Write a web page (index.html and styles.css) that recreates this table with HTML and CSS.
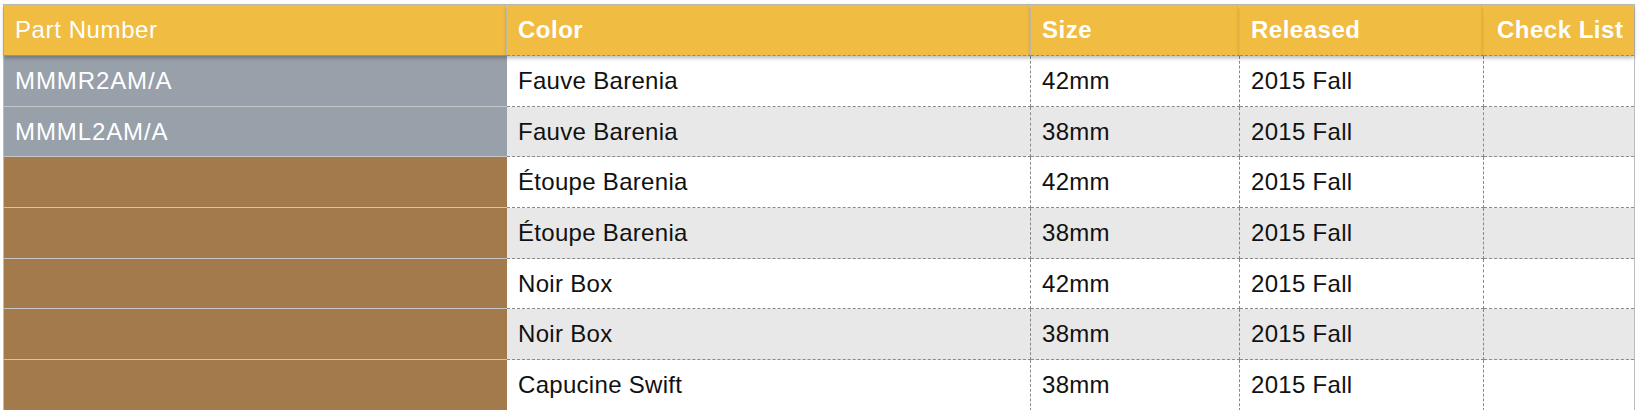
FILE: index.html
```html
<!DOCTYPE html>
<html lang="en">
<head>
<meta charset="utf-8">
<title>Watch Bands</title>
<link rel="stylesheet" href="styles.css">
</head>
<body>
<table class="sheet">
  <colgroup>
    <col class="c-part">
    <col class="c-color">
    <col class="c-size">
    <col class="c-rel">
    <col class="c-check">
  </colgroup>
  <thead>
    <tr>
      <th class="h-part">Part Number</th>
      <th>Color</th>
      <th>Size</th>
      <th>Released</th>
      <th class="h-last">Check List</th>
    </tr>
  </thead>
  <tbody>
    <tr>
      <td class="part gray">MMMR2AM/A</td>
      <td>Fauve Barenia</td>
      <td>42mm</td>
      <td>2015 Fall</td>
      <td class="last"></td>
    </tr>
    <tr>
      <td class="part gray">MMML2AM/A</td>
      <td>Fauve Barenia</td>
      <td>38mm</td>
      <td>2015 Fall</td>
      <td class="last"></td>
    </tr>
    <tr>
      <td class="part brown"></td>
      <td>Étoupe Barenia</td>
      <td>42mm</td>
      <td>2015 Fall</td>
      <td class="last"></td>
    </tr>
    <tr>
      <td class="part brown"></td>
      <td>Étoupe Barenia</td>
      <td>38mm</td>
      <td>2015 Fall</td>
      <td class="last"></td>
    </tr>
    <tr>
      <td class="part brown"></td>
      <td>Noir Box</td>
      <td>42mm</td>
      <td>2015 Fall</td>
      <td class="last"></td>
    </tr>
    <tr>
      <td class="part brown"></td>
      <td>Noir Box</td>
      <td>38mm</td>
      <td>2015 Fall</td>
      <td class="last"></td>
    </tr>
    <tr>
      <td class="part brown"></td>
      <td>Capucine Swift</td>
      <td>38mm</td>
      <td>2015 Fall</td>
      <td class="last"></td>
    </tr>
  </tbody>
</table>
</body>
</html>
```

FILE: styles.css
```css
html, body {
  margin: 0;
  padding: 0;
  background: #ffffff;
  overflow: hidden;
}

body {
  padding: 4px 0 0 3px;
  font-family: "Liberation Sans", Arial, Helvetica, sans-serif;
  font-size: 24px;
}

.sheet {
  table-layout: fixed;
  border-collapse: separate;
  border-spacing: 0;
  width: 1632px;
  border-top: 1px solid #bdbdbd;
  border-left: 1px solid #bdbdbd;
  border-right: 1px solid #bdbdbd;
}

.c-part { width: 503px; }
.c-color { width: 524px; }
.c-size { width: 209px; }
.c-rel { width: 244px; }
.c-check { width: 150px; }

thead th {
  position: relative;
  z-index: 1;
  height: 50px;
  padding: 0 0 0 11px;
  background: #f0bc42;
  color: #ffffff;
  font-weight: bold;
  text-align: left;
  white-space: nowrap;
  overflow: hidden;
  letter-spacing: 0.5px;
  border-right: 1px solid #d9cfb2;
  border-bottom: 1px dashed #8a8a8a;
  box-shadow: 0 2px 4px rgba(0, 0, 0, 0.28);
}

thead th.h-part {
  font-weight: normal;
  letter-spacing: 0.6px;
  border-bottom: 1px solid #8d939b;
}

thead th.h-last {
  border-right: none;
  padding-left: 13px;
}

tbody td {
  height: 49.7px;
  padding: 0 0 0 11px;
  color: #111111;
  white-space: nowrap;
  overflow: hidden;
  letter-spacing: 0.3px;
  border-right: 1px dashed #8a8a8a;
  border-bottom: 1px dashed #8a8a8a;
  line-height: 1;
}

tbody tr:nth-child(even) td {
  background: #e8e8e8;
}

tbody td.last {
  border-right: none;
}

tbody td.part {
  color: #ffffff;
  letter-spacing: 0.9px;
  border-right: none;
  border-bottom: 1px solid #c6c6c6;
}

tbody tr td.gray {
  background: #98a0aa;
}

tbody tr td.brown {
  background: #a37a4b;
}
```
